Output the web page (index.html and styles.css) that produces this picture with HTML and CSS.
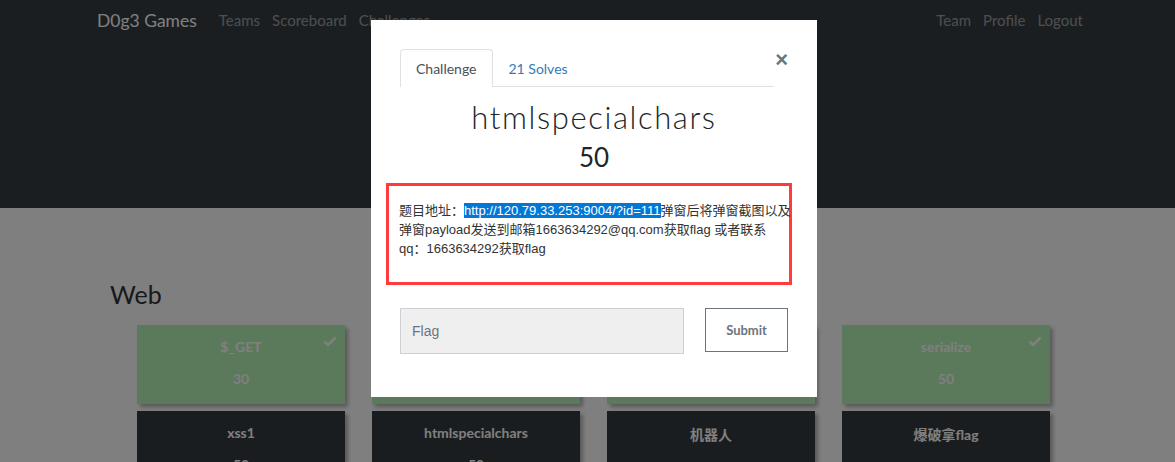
FILE: index.html
```html
<!DOCTYPE html>
<html lang="zh">
<head>
    <meta charset="UTF-8">
    <title>Challenges - D0g3 Games</title>
    <link rel="stylesheet" href="styles.css">
</head>
<body>
    <nav class="navbar">
        <div class="nav-left">
            <a class="brand" href="#">D0g3 Games</a>
            <a class="nav-link" href="#">Teams</a>
            <a class="nav-link" href="#">Scoreboard</a>
            <a class="nav-link" href="#">Challenges</a>
        </div>
        <div class="nav-right">
            <a class="nav-link" href="#">Team</a>
            <a class="nav-link" href="#">Profile</a>
            <a class="nav-link" href="#">Logout</a>
        </div>
    </nav>
    <div class="jumbotron"></div>

    <div class="category">
        <h3 class="category-title">Web</h3>
        <div class="board">
            <div class="card solved"><span class="check"><svg width="14" height="11" viewBox="0 0 14 11"><polyline points="1.5,5.5 5,9 12.5,1.5" fill="none" stroke="#fff" stroke-width="2.6"/></svg></span><p class="card-name">$_GET</p><p class="card-value">30</p></div>
            <div class="card solved"><span class="check"><svg width="14" height="11" viewBox="0 0 14 11"><polyline points="1.5,5.5 5,9 12.5,1.5" fill="none" stroke="#fff" stroke-width="2.6"/></svg></span><p class="card-name">$_POST</p><p class="card-value">30</p></div>
            <div class="card solved"><span class="check"><svg width="14" height="11" viewBox="0 0 14 11"><polyline points="1.5,5.5 5,9 12.5,1.5" fill="none" stroke="#fff" stroke-width="2.6"/></svg></span><p class="card-name">cookie</p><p class="card-value">30</p></div>
            <div class="card solved"><span class="check"><svg width="14" height="11" viewBox="0 0 14 11"><polyline points="1.5,5.5 5,9 12.5,1.5" fill="none" stroke="#fff" stroke-width="2.6"/></svg></span><p class="card-name">serialize</p><p class="card-value">50</p></div>
            <div class="card"><p class="card-name">xss1</p><p class="card-value">50</p></div>
            <div class="card"><p class="card-name">htmlspecialchars</p><p class="card-value">50</p></div>
            <div class="card"><p class="card-name">机器人</p><p class="card-value">50</p></div>
            <div class="card"><p class="card-name">爆破拿flag</p><p class="card-value">50</p></div>
        </div>
    </div>

    <div class="backdrop"></div>

    <div class="modal">
        <div class="modal-head">
            <ul class="tabs">
                <li class="tab active">Challenge</li>
                <li class="tab">21 Solves</li>
            </ul>
            <button class="close">&times;</button>
        </div>
        <h2 class="chal-name">htmlspecialchars</h2>
        <h3 class="chal-value">50</h3>
        <div class="chal-desc">
            <p>题目地址：<span class="selected">http://120.79.33.253:9004/?id=111</span>弹窗后将弹窗截图以及弹窗payload发送到邮箱1663634292@qq.com获取flag 或者联系<span class="nowrap">qq：1663634292获取flag</span></p>
        </div>
        <div class="submit-row">
            <input class="flag-input" type="text" placeholder="Flag">
            <button class="submit-btn">Submit</button>
        </div>
    </div>
</body>
</html>
```

FILE: styles.css
```css
body {
    margin: 0;
    background: #fff;
    font-family: 'Lato', 'Noto Sans CJK SC', sans-serif;
    color: #343a40;
    overflow: hidden;
}

.navbar {
    display: flex;
    justify-content: space-between;
    align-items: center;
    height: 40px;
    padding: 0 92px 0 97px;
    background: #363c42;
}

.nav-left, .nav-right {
    display: flex;
    align-items: center;
}

.brand {
    color: #fff;
    font-size: 17.5px;
    text-decoration: none;
    margin-right: 22px;
}

.nav-link {
    color: rgba(255,255,255,0.5);
    font-size: 15px;
    text-decoration: none;
    margin-right: 12px;
}

.nav-right .nav-link {
    margin: 0 0 0 12px;
}

.jumbotron {
    height: 168px;
    background: #363c42;
}

.category {
    padding: 71px 0 0 110px;
}

.category-title {
    margin: 0 0 16px;
    font-size: 25px;
    font-weight: 400;
    color: #333;
}

.board {
    display: grid;
    grid-template-columns: repeat(4, 208px);
    gap: 7px 27px;
    margin-left: 27px;
}

.card {
    position: relative;
    height: 79px;
    background: #343a40;
    box-shadow: 3px 3px 4px rgba(0,0,0,0.3);
    text-align: center;
    color: #fff;
    font-size: 14px;
    font-weight: 700;
}

.card.solved {
    background: #b6f4b6;
}

.check {
    position: absolute;
    top: 8px;
    right: 8px;
}

.card-name {
    margin: 0;
    padding-top: 13px;
}

.card-value {
    margin: 15px 0 0;
}

.backdrop {
    position: fixed;
    top: 0;
    left: 0;
    right: 0;
    bottom: 0;
    background: rgba(0,0,0,0.5);
}

.modal {
    position: fixed;
    top: 20px;
    left: 371px;
    width: 446px;
    height: 377px;
    box-sizing: border-box;
    padding: 29px 29px 0;
    background: #fff;
}

.modal-head {
    display: flex;
    align-items: flex-start;
}

.tabs {
    display: flex;
    flex: 1;
    margin: 0;
    padding: 0;
    list-style: none;
    border-bottom: 1px solid #dee2e6;
}

.tab {
    height: 36px;
    line-height: 37px;
    padding: 0 15px;
    font-size: 14px;
    color: #337ab7;
    border: 1px solid transparent;
    border-bottom: none;
    margin-bottom: -1px;
}

.tab.active {
    color: #495057;
    background: #fff;
    border-color: #dee2e6;
    border-radius: 4px 4px 0 0;
    height: 37px;
}

.close {
    margin: 0 0 0 1px;
    padding: 0;
    border: none;
    background: none;
    font-family: 'Liberation Sans', sans-serif;
    font-size: 22px;
    font-weight: 700;
    line-height: 22px;
    color: #6c757d;
}

.chal-name {
    margin: 11px 0 0;
    text-align: center;
    font-size: 31px;
    font-weight: 300;
    color: #212529;
    letter-spacing: 1.6px;
}

.chal-value {
    margin: 5px 0 0;
    text-align: center;
    font-size: 26px;
    font-weight: 400;
    color: #212529;
}

.chal-desc {
    margin: 10px -4px 0 -14px;
    height: 96px;
    border: 3px solid #ff3b3b;
    padding: 0 0 0 10px;
}

.chal-desc p {
    margin: 15px -5px 0 0;
    font-family: 'Liberation Sans', 'Noto Sans CJK SC', sans-serif;
    font-size: 13px;
    line-height: 19px;
    color: #333;
}

.nowrap {
    white-space: nowrap;
}

.selected {
    background: #0078d7;
    color: #fff;
}

.submit-row {
    display: flex;
    justify-content: space-between;
    align-items: flex-start;
    margin-top: 23px;
}

.flag-input {
    width: 284px;
    height: 46px;
    box-sizing: border-box;
    padding: 0 11px;
    background: #efefef;
    border: 1px solid #ccd0d4;
    font-family: 'Liberation Sans', sans-serif;
    font-size: 14px;
}

.flag-input::placeholder {
    color: #6c757d;
}

.submit-btn {
    width: 83px;
    height: 44px;
    background: #fff;
    border: 1px solid #6c757d;
    font-family: 'Lato', sans-serif;
    font-size: 13px;
    font-weight: 700;
    color: #6c757d;
}
```
